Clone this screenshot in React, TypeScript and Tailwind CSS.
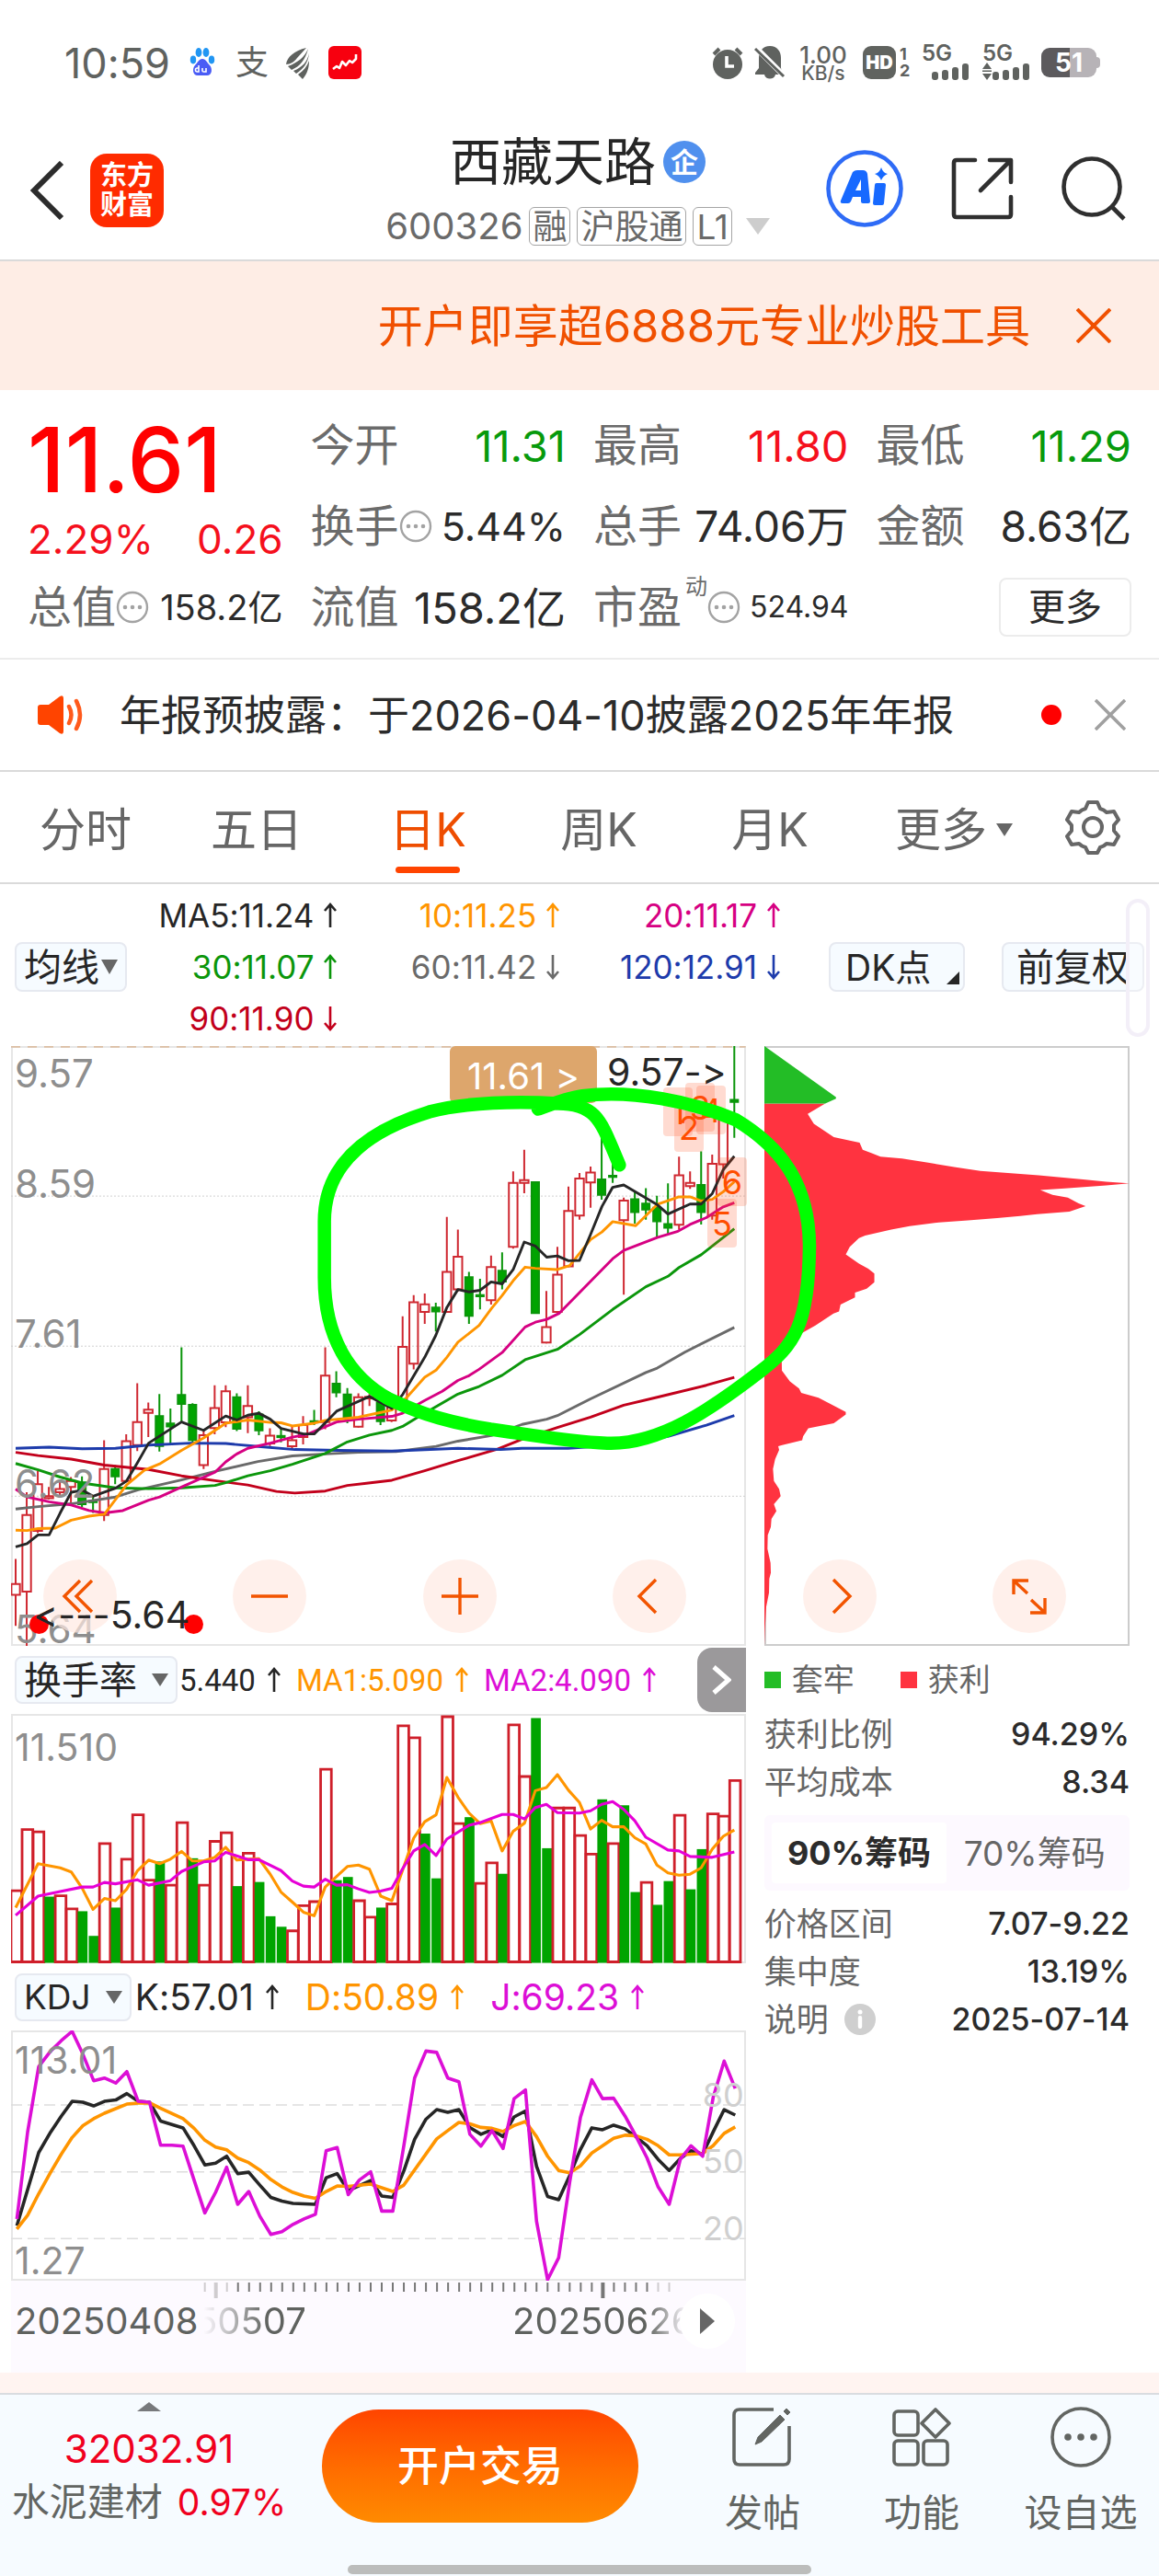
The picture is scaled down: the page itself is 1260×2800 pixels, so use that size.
import React from "react";

type Candle = [number, number, number, number, "r" | "g"];
type Pt = [number, number];

/* high, body top, body bottom, low, direction – in chart units, 36 units per day */
const candles: Candle[] = [
  [1325, 1388, 1415, 1493, "r"], [1158, 1215, 1407, 1543, "r"], [1105, 1138, 1255, 1260, "r"],
  [1145, 1168, 1173, 1176, "r"], [1128, 1150, 1158, 1168, "r"], [1120, 1130, 1145, 1185, "r"],
  [1118, 1133, 1188, 1195, "g"], [1165, 1180, 1183, 1210, "g"], [1028, 1100, 1215, 1230, "r"],
  [1090, 1100, 1118, 1138, "g"], [1013, 1030, 1130, 1133, "r"], [885, 982, 1040, 1055, "r"],
  [933, 951, 959, 1020, "r"], [912, 967, 1042, 1056, "g"], [948, 986, 993, 1036, "g"],
  [795, 914, 937, 985, "g"], [935, 939, 1027, 1033, "g"], [1005, 1015, 1090, 1100, "r"],
  [890, 947, 997, 1013, "r"], [890, 905, 983, 995, "r"], [910, 920, 999, 1005, "g"],
  [890, 942, 970, 1010, "r"], [955, 963, 1003, 1015, "g"], [998, 1016, 1036, 1042, "r"],
  [1000, 1017, 1020, 1033, "g"], [990, 1028, 1043, 1048, "r"], [967, 990, 1020, 1038, "r"],
  [952, 980, 983, 990, "g"], [795, 866, 982, 1000, "r"], [855, 886, 908, 920, "g"],
  [897, 913, 970, 985, "g"], [910, 920, 994, 996, "r"], [912, 919, 923, 942, "r"],
  [925, 933, 980, 990, "g"], [930, 945, 978, 982, "r"], [717, 794, 928, 930, "r"],
  [664, 682, 836, 850, "r"], [660, 687, 706, 736, "r"], [683, 695, 705, 755, "g"],
  [468, 606, 706, 708, "r"], [500, 568, 650, 655, "r"], [606, 619, 716, 736, "g"],
  [623, 664, 667, 700, "g"], [565, 594, 677, 688, "r"], [557, 603, 630, 650, "g"],
  [354, 383, 543, 548, "r"], [300, 376, 383, 409, "r"], [380, 381, 709, 710, "g"],
  [654, 744, 783, 785, "r"], [543, 613, 706, 708, "r"], [392, 453, 592, 594, "r"],
  [358, 372, 465, 475, "r"], [342, 357, 382, 445, "r"], [265, 374, 413, 425, "g"],
  [335, 365, 368, 383, "g"], [420, 427, 476, 663, "r"], [405, 424, 456, 485, "g"],
  [396, 435, 450, 475, "g"], [415, 445, 479, 518, "g"], [384, 486, 495, 510, "g"],
  [317, 364, 488, 500, "r"], [354, 383, 391, 398, "r"], [304, 388, 456, 487, "g"],
  [312, 335, 465, 475, "r"], [200, 210, 336, 372, "r"], [40, 175, 180, 270, "g"],
];

const maLines: { color: string; pts: Pt[] }[] = [
  { color: "#6a6a6a", pts: [[51,1200],[124,1194],[232,1187],[376,1170],[450,1152],[591,1127],[700,1106],[840,1081],[952,1067],[1059,1062],[1167,1058],[1290,1056],[1420,1043],[1491,1030],[1600,1016],[1700,988],[1780,975],[1815,966],[1923,924],[2103,858],[2140,847],[2230,807],[2391,745]] },
  { color: "#c2001b", pts: [[51,1058],[124,1066],[232,1075],[340,1090],[484,1101],[591,1117],[700,1129],[807,1140],[900,1156],[960,1160],[1059,1155],[1131,1141],[1200,1135],[1276,1128],[1383,1104],[1491,1079],[1620,1050],[1700,1025],[1815,996],[1923,970],[2031,940],[2140,920],[2300,890],[2391,870]] },
  { color: "#1d3bab", pts: [[51,1048],[160,1045],[268,1049],[376,1048],[484,1040],[620,1035],[735,1036],[850,1044],[960,1051],[1100,1053],[1276,1055],[1491,1048],[1630,1051],[1700,1048],[1850,1048],[2000,1040],[2175,1018],[2300,990],[2391,966]] },
  { color: "#0b960b", pts: [[51,1086],[124,1102],[196,1120],[268,1135],[376,1147],[484,1149],[591,1147],[700,1141],[735,1134],[807,1117],[880,1104],[952,1088],[1059,1061],[1131,1032],[1203,1015],[1276,1003],[1311,993],[1360,970],[1491,912],[1560,893],[1635,865],[1710,826],[1815,800],[1887,763],[1995,700],[2103,643],[2175,617],[2211,595],[2283,563],[2391,498]] },
  { color: "#d60082", pts: [[51,1150],[88,1170],[160,1182],[232,1190],[290,1204],[340,1210],[400,1204],[484,1178],[520,1170],[591,1145],[700,1108],[735,1082],[771,1062],[807,1048],[880,1035],[952,1020],[1000,1013],[1096,982],[1167,975],[1276,968],[1311,960],[1383,928],[1440,905],[1491,878],[1527,866],[1560,850],[1635,808],[1710,744],[1743,732],[1780,725],[1820,710],[1995,573],[2031,552],[2140,520],[2205,505],[2247,487],[2300,470],[2355,443],[2391,433]] },
  { color: "#ff9500", pts: [[51,1253],[88,1254],[124,1249],[180,1248],[232,1228],[290,1218],[340,1213],[412,1140],[470,1103],[520,1087],[591,1053],[663,1022],[735,985],[807,977],[880,983],[915,984],[952,992],[1023,985],[1060,978],[1167,970],[1240,958],[1276,952],[1325,920],[1383,870],[1420,852],[1455,820],[1491,782],[1560,740],[1600,698],[1635,665],[1671,628],[1710,594],[1743,597],[1815,600],[1855,590],[1923,525],[1960,506],[1995,480],[2070,490],[2140,437],[2211,418],[2247,418],[2283,428],[2319,424],[2355,405],[2391,380]] },
  { color: "#262626", pts: [[51,1295],[88,1287],[124,1265],[160,1265],[196,1210],[232,1158],[268,1153],[303,1168],[340,1158],[376,1148],[412,1130],[447,1085],[484,1035],[591,982],[663,1003],[735,967],[771,977],[807,965],[843,960],[880,975],[915,998],[988,1012],[1023,1012],[1096,955],[1203,918],[1276,948],[1312,912],[1383,820],[1419,765],[1455,695],[1491,650],[1527,656],[1563,652],[1599,631],[1635,636],[1671,600],[1707,531],[1743,541],[1780,569],[1815,566],[1851,578],[1887,577],[1923,512],[1960,442],[1995,394],[2031,388],[2139,437],[2175,461],[2247,436],[2283,436],[2319,410],[2355,350],[2391,316]] },
];

const bars: [number, "r" | "g"][] = [
  [551,"r"],[417,"r"],[422,"r"],[566,"g"],[562,"r"],[591,"r"],[598,"g"],[652,"g"],[448,"r"],[590,"g"],[482,"r"],
  [385,"r"],[528,"r"],[489,"g"],[539,"r"],[402,"r"],[482,"g"],[539,"r"],[443,"r"],[424,"r"],[543,"g"],[469,"r"],
  [534,"g"],[609,"g"],[632,"g"],[639,"r"],[584,"r"],[575,"r"],[285,"r"],[530,"g"],[523,"g"],[573,"r"],[609,"r"],
  [590,"g"],[580,"r"],[190,"r"],[216,"r"],[428,"g"],[526,"g"],[170,"r"],[404,"r"],[392,"g"],[535,"r"],[490,"r"],
  [516,"g"],[188,"r"],[301,"r"],[175,"g"],[460,"g"],[370,"r"],[370,"r"],[430,"r"],[471,"r"],[353,"g"],[448,"r"],
  [366,"g"],[556,"g"],[533,"r"],[584,"g"],[532,"g"],[386,"r"],[550,"g"],[462,"g"],[383,"r"],[388,"r"],[310,"r"],
];

const turnLines: { color: string; pts: Pt[] }[] = [
  { color: "#ff9500", pts: [[51,590],[124,494],[196,503],[232,512],[268,548],[303,594],[340,570],[376,575],[412,550],[447,510],[484,486],[520,494],[555,484],[591,467],[627,488],[663,488],[699,480],[735,458],[771,486],[807,484],[843,483],[880,517],[915,556],[952,578],[988,600],[1023,608],[1059,545],[1096,522],[1131,500],[1167,497],[1203,506],[1240,565],[1276,575],[1311,508],[1347,438],[1383,402],[1420,387],[1455,305],[1491,348],[1527,383],[1563,406],[1599,400],[1635,466],[1671,423],[1708,405],[1743,334],[1779,327],[1815,299],[1851,333],[1887,360],[1923,418],[1959,399],[1995,413],[2031,413],[2067,437],[2103,451],[2139,497],[2175,514],[2211,519],[2247,517],[2283,503],[2319,462],[2355,434],[2391,420]] },
  { color: "#e600d6", pts: [[51,607],[124,565],[196,555],[268,545],[303,545],[340,535],[376,538],[447,529],[484,541],[555,531],[591,511],[663,490],[699,488],[735,469],[807,485],[843,485],[915,509],[952,532],[988,543],[1023,545],[1059,528],[1096,541],[1131,540],[1167,549],[1203,557],[1240,554],[1276,548],[1311,505],[1347,466],[1383,452],[1420,476],[1455,440],[1527,410],[1563,404],[1635,386],[1671,386],[1708,396],[1743,371],[1779,364],[1815,382],[1887,383],[1923,378],[1959,364],[1995,358],[2031,375],[2067,400],[2103,436],[2175,464],[2211,466],[2247,478],[2319,480],[2391,468]] },
];

const kdjLines: { color: string; pts: Pt[] }[] = [
  { color: "#262626", pts: [[55,1285],[126,1125],[165,1080],[200,1045],[235,1013],[270,1015],[305,1023],[340,1013],[377,1010],[413,996],[450,1013],[487,1015],[523,1056],[596,1071],[632,1110],[667,1152],[702,1148],[738,1133],[774,1171],[810,1168],[846,1196],[882,1223],[918,1231],[954,1236],[1027,1238],[1062,1180],[1098,1171],[1134,1208],[1207,1186],[1243,1220],[1279,1223],[1315,1165],[1350,1096],[1387,1052],[1422,1031],[1458,1037],[1494,1031],[1530,1070],[1566,1085],[1602,1075],[1638,1090],[1674,1047],[1711,1034],[1747,1155],[1783,1221],[1819,1228],[1855,1175],[1890,1118],[1927,1071],[1962,1075],[1998,1065],[2035,1073],[2070,1090],[2107,1110],[2143,1140],[2179,1164],[2215,1138],[2250,1121],[2288,1128],[2322,1080],[2358,1031],[2394,1043]] },
  { color: "#ff9500", pts: [[55,1292],[90,1262],[126,1215],[165,1168],[200,1128],[235,1092],[270,1066],[305,1051],[340,1039],[413,1019],[450,1017],[490,1017],[523,1028],[596,1051],[632,1072],[667,1098],[702,1113],[738,1119],[774,1137],[810,1147],[846,1163],[882,1184],[918,1200],[954,1212],[990,1220],[1027,1225],[1062,1210],[1098,1198],[1134,1199],[1207,1194],[1279,1210],[1315,1196],[1422,1095],[1458,1077],[1494,1059],[1530,1062],[1566,1070],[1602,1072],[1638,1079],[1674,1066],[1711,1057],[1747,1090],[1783,1133],[1819,1164],[1855,1169],[1890,1154],[1927,1126],[1998,1094],[2035,1087],[2070,1088],[2107,1096],[2143,1110],[2179,1130],[2215,1130],[2288,1127],[2322,1110],[2358,1083],[2394,1069]] },
  { color: "#dc0fd6", pts: [[55,1270],[90,1080],[126,937],[165,903],[200,880],[235,860],[270,910],[305,968],[340,962],[377,973],[413,948],[450,1013],[487,1015],[523,1109],[560,1109],[596,1111],[632,1185],[667,1257],[702,1212],[738,1157],[774,1238],[810,1210],[846,1264],[882,1304],[918,1298],[954,1282],[990,1270],[1027,1260],[1062,1121],[1098,1114],[1134,1217],[1170,1185],[1207,1167],[1243,1253],[1279,1253],[1315,1110],[1350,962],[1387,903],[1422,906],[1458,962],[1494,970],[1530,1085],[1566,1111],[1602,1077],[1638,1116],[1674,1007],[1711,988],[1747,1275],[1783,1403],[1819,1355],[1855,1190],[1890,1048],[1927,966],[1962,1007],[1998,1006],[2035,1045],[2070,1088],[2107,1137],[2143,1200],[2179,1238],[2215,1140],[2250,1110],[2288,1133],[2322,1005],[2358,925],[2394,985]] },
];

const profitArea =
  "92,184 290,184 233,210 253,235 318,268 370,277 402,282 412,300 440,308 470,317 540,322 630,333 710,343 795,353 885,358 985,364 1130,374 1205,380 1280,384 1205,389 1070,397 990,401 1030,413 1080,420 1115,434 1138,441 1085,455 980,461 925,466 850,471 755,477 660,482 565,491 505,500 420,515 400,521 370,543 357,562 400,585 430,598 450,610 450,632 425,648 387,658 387,670 340,688 335,705 317,710 258,740 185,772 148,805 149,853 175,880 205,898 212,909 268,921 357,957 357,963 318,985 235,998 218,1018 215,1028 150,1040 137,1043 140,1052 127,1075 120,1100 123,1130 140,1150 145,1168 123,1188 131,1205 115,1225 113,1245 103,1265 102,1300 112,1335 113,1360 108,1375 107,1410 98,1445 94,1500 92,1543";

const join = (pts: Pt[]) => pts.map((p) => p.join(",")).join(" ");

function Lines({ lines, width }: { lines: { color: string; pts: Pt[] }[]; width: number }) {
  return (
    <>
      {lines.map((l) => (
        <polyline key={l.color} points={join(l.pts)} fill="none" stroke={l.color} strokeWidth={width} strokeLinejoin="round" vectorEffect="non-scaling-stroke" />
      ))}
    </>
  );
}

function Arrow({ down = false }: { down?: boolean }) {
  return (
    <svg viewBox="0 0 16 28" className="h-7 w-4 shrink-0" fill="none" stroke="currentColor" strokeWidth="2.6" role="img" aria-label={down ? "下降" : "上升"}>
      {down ? <path d="M8 1v25M2 19l6 7 6-7" /> : <path d="M8 27V2M2 9l6-7 6 7" />}
    </svg>
  );
}

function Triangle({ className }: { className: string }) {
  return (
    <svg viewBox="0 0 20 18" className={className} preserveAspectRatio="none" fill="currentColor" aria-hidden="true">
      <path d="M0 0h20L10 18z" />
    </svg>
  );
}

function Dots() {
  return (
    <svg viewBox="0 0 36 36" className="size-9 shrink-0 text-[#a3a3a3]" aria-hidden="true">
      <circle cx="18" cy="18" r="16" fill="none" stroke="currentColor" strokeWidth="2.4" />
      <g fill="currentColor"><circle cx="10" cy="18" r="2.3" /><circle cx="18" cy="18" r="2.3" /><circle cx="26" cy="18" r="2.3" /></g>
    </svg>
  );
}

function Cross({ className }: { className: string }) {
  return (
    <svg viewBox="0 0 36 36" className={className} fill="none" stroke="currentColor" strokeWidth="3.8" aria-hidden="true">
      <path d="M1 1l34 34M35 1L1 35" />
    </svg>
  );
}

function Signal({ data = false }: { data?: boolean }) {
  return (
    <div className="flex w-[52px] flex-col">
      <span className="text-2xl leading-5 font-semibold">5G</span>
      <svg viewBox="0 0 52 20" className="h-5 w-[52px]" fill="currentColor" aria-hidden="true">
        {data && <path d="M5 0l5 7H0zM0 8.5h10v1.5H0zM0 12h10l-5 7z" />}
        <rect x="11" y="10" width="7" height="9" rx="3" /><rect x="22" y="8" width="7" height="11" rx="3" />
        <rect x="33" y="5" width="7" height="14" rx="3" /><rect x="44" y="1" width="7" height="18" rx="3" />
      </svg>
    </div>
  );
}

function StatusBar() {
  return (
    <div className="flex h-[136px] items-center justify-between pr-16 pl-[70px] text-[#5f625f]">
      <div className="flex items-center">
        <span className="w-[136px] text-[45px] leading-none">10:59</span>
        <svg viewBox="0 0 28 34" className="h-9 w-7" aria-label="百度" role="img">
          <g fill="#2196f3"><ellipse cx="10" cy="6" rx="3.4" ry="5" /><ellipse cx="18" cy="6" rx="3.4" ry="5" /><ellipse cx="4" cy="14" rx="3.2" ry="4.4" /><ellipse cx="24" cy="14" rx="3.2" ry="4.4" /></g>
          <path d="M14 13c4 0 5 4 8 7s3 11-3 11H9c-6 0-6-8-3-11s4-7 8-7z" fill="#4a5cf5" />
          <path d="M10 20v7H8.500a2 2 0 010-4H10M14 23v3q0 1 1.500 1H18v-4" fill="none" stroke="#fff" strokeWidth="1.600" />
        </svg>
        <span className="ml-[22px] text-4xl leading-none">支</span>
        <svg viewBox="0 0 26 36" className="ml-[19px] h-9 w-[26px]" fill="currentColor" aria-hidden="true">
          <path d="M22 2C9 5 1 12 0 20c5 0 9-3 12-7zM24 3C20 12 13 18 2 22l4 4c9-4 15-11 18-23zM25 8c-2 9-7 15-17 19l3 3c8-5 13-12 14-22zM25 16c-2 6-6 11-12 15l5 5c5-6 7-12 7-20z" />
        </svg>
        <svg viewBox="0 0 36 36" className="ml-5 size-9" role="img" aria-label="东方财富">
          <rect width="36" height="36" rx="6" fill="#f7000f" />
          <path d="M5 25l4-3 3 2 3-7 4 4 4-5 3 2 4-4v-5" fill="none" stroke="#fff" strokeWidth="2.600" strokeLinejoin="round" />
        </svg>
      </div>
      <div className="flex items-center">
        <svg viewBox="0 0 34 36" className="h-9 w-[34px]" aria-hidden="true">
          <circle cx="17" cy="20" r="16" fill="currentColor" />
          <path d="M2 9l6-6M32 9l-6-6" stroke="currentColor" strokeWidth="4" />
          <path d="M16 11v11h8" fill="none" stroke="#fff" strokeWidth="3.600" />
        </svg>
        <svg viewBox="0 0 34 36" className="ml-3 h-9 w-[34px]" aria-hidden="true">
          <path d="M17 0C9 0 5 6 5 13v11l-4 5v2h10c1 6 11 6 12 0h8L29 24V13C29 6 25 0 17 0z" fill="currentColor" />
          <path d="M0 0l34 34" stroke="#fff" strokeWidth="6" /><path d="M1 3l31 30" stroke="currentColor" strokeWidth="3" />
        </svg>
        <div className="ml-2.5 flex w-[62px] flex-col items-center font-medium">
          <span className="text-[26px] leading-6">1.00</span>
          <span className="text-[21px] leading-4">KB/s</span>
        </div>
        <span className="ml-3 flex size-9 items-center justify-center rounded-[9px] bg-[#60635f] text-xl leading-none font-black text-white">HD</span>
        <span className="ml-1 flex w-3 flex-col text-lg leading-[18px] font-bold"><span>1</span><span>2</span></span>
        <div className="ml-3"><Signal /></div>
        <div className="ml-3.5"><Signal data /></div>
        <div className="ml-3 flex items-center">
          <span className="flex h-8 w-[60px] items-center justify-center rounded-[9px] bg-[linear-gradient(to_right,#5c5a5d_51%,#b7b3b7_51%)] text-[28px] leading-none font-bold text-white">51</span>
          <span className="h-3 w-1 rounded-r bg-[#b7b3b7]" />
        </div>
      </div>
    </div>
  );
}

function Header() {
  const tag = "flex h-[42px] items-center rounded-md border border-[#a5a5a5] px-[3px] leading-none";
  return (
    <header className="grid h-[148px] grid-cols-[1fr_auto_1fr] items-center border-b-2 border-[#dadada] pr-9 pl-8">
      <div className="flex items-center gap-7 pb-1">
        <button aria-label="返回">
          <svg viewBox="0 0 38 64" className="h-16 w-[38px]" fill="none" stroke="#2c2c2c" strokeWidth="6"><path d="M35 2L5 32l30 30" /></svg>
        </button>
        <a href="#home" className="flex size-20 flex-col items-center justify-center rounded-[18px] bg-[#ff2b00] text-[29px] leading-8 font-bold text-white">
          <span>东方</span><span>财富</span>
        </a>
      </div>
      <div className="flex flex-col items-center">
        <h1 className="flex h-[74px] items-center gap-2 text-[56px] leading-none text-[#262626]">
          西藏天路
          <span className="flex size-[46px] items-center justify-center rounded-full bg-[#5090ee] text-[30px] font-bold text-white">企</span>
        </h1>
        <div className="flex h-[66px] items-center gap-[7px] text-[37px] text-[#6a6a6a]">
          <span className="text-[40px] leading-none">600326</span>
          <span className={tag}>融</span><span className={tag}>沪股通</span><span className={tag}>L1</span>
          <Triangle className="ml-2 h-[18px] w-[26px] text-[#cdcdcd]" />
        </div>
      </div>
      <div className="flex items-center justify-end gap-[52px] pb-2">
        <button aria-label="AI 助手">
          <svg viewBox="0 0 84 84" className="size-[84px]">
            <circle cx="42" cy="42" r="39.500" fill="none" stroke="#2e6bf6" strokeWidth="4.500" />
            <path fillRule="evenodd" d="M29 24q2-2 5-2h6q4 0 5 4l3 30q0 2-2 2h-6q-2 0-2-2v-5h-9l-2 5q-1 2-3 2h-6q-3 0-2-3zM38 32l-6 12h6z" fill="#1769ff" />
            <path d="M55 36h8q2 0 2 2l-2 20q0 2-2 2h-8q-2 0-2-2l2-20q0-2 2-2zM60 19q2 6 7 7-5 2-7 7-2-5-7-7 5-1 7-7z" fill="#1769ff" />
          </svg>
        </button>
        <button aria-label="分享">
          <svg viewBox="0 0 68 68" className="size-[68px]" fill="none" stroke="#2f2f2f" strokeWidth="4.600" strokeLinecap="round" strokeLinejoin="round">
            <path d="M26 3H6Q3 3 3 6v56q0 3 3 3h56q3 0 3-3V43M42 3h23v24M64 4L32 36" />
          </svg>
        </button>
        <button aria-label="搜索">
          <svg viewBox="0 0 70 70" className="size-[70px]" fill="none" stroke="#2f2f2f" strokeWidth="4.600">
            <circle cx="33" cy="33" r="30.500" /><path d="M54 54l14 14" />
          </svg>
        </button>
      </div>
    </header>
  );
}

function Quote() {
  const label = "text-5xl leading-none text-[#6b6b6b]";
  const row = "flex h-[88px] items-center justify-between";
  return (
    <section className="grid grid-cols-4 gap-x-[30px] border-b-2 border-[#ececec] px-[30px] pt-4 pb-[11px] text-[47px] leading-none text-[#2b2b2b]">
      <div className="row-span-2 flex flex-col justify-between pt-5 pb-2 text-[#f5101d]">
        <span className="text-[98px] leading-[80px] font-medium text-[#ff0000]">11.61</span>
        <div className="flex justify-between text-[44px]"><span>2.29%</span><span>0.26</span></div>
      </div>
      <div className={row}><span className={label}>今开</span><span className="text-[#079a0c]">11.31</span></div>
      <div className={row}><span className={label}>最高</span><span className="text-[#f5101d]">11.80</span></div>
      <div className={row}><span className={label}>最低</span><span className="text-[#079a0c]">11.29</span></div>
      <div className={row}><span className="flex items-center"><span className={label}>换手</span><Dots /></span><span className="text-[43px]">5.44%</span></div>
      <div className={row}><span className={label}>总手</span><span className="text-[46px]">74.06万</span></div>
      <div className={row}><span className={label}>金额</span><span className="text-[46px]">8.63亿</span></div>
      <div className={row}><span className="flex items-center"><span className={label}>总值</span><Dots /></span><span className="text-[38px]">158.2亿</span></div>
      <div className={row}><span className={label}>流值</span><span>158.2亿</span></div>
      <div className={row}>
        <span className="flex items-center"><span className={label}>市盈</span><span className="mb-11 ml-1 text-2xl leading-none text-[#6b6b6b]">动</span><Dots /></span>
        <span className="text-[32px]">524.94</span>
      </div>
      <div className="flex items-center justify-end"><button className="h-16 rounded-lg border-2 border-[#ececec] px-[30px] text-[40px] leading-none">更多</button></div>
    </section>
  );
}

function Notice() {
  return (
    <section className="flex h-[122px] items-center border-b-2 border-[#dadada] pr-9 pl-10">
      <svg viewBox="0 0 52 42" className="h-[42px] w-[52px]" aria-hidden="true">
        <path d="M1 13q0-3 3-3h9L25 1q4-2 4 2v36q0 4-4 2l-12-9H4q-3 0-3-3z" fill="#ff4400" />
        <path d="M35 12q5 9 0 18M43 6q8 15 0 30" fill="none" stroke="#ff5a1c" strokeWidth="4.500" strokeLinecap="round" />
      </svg>
      <a href="#notice" className="ml-[38px] flex-1 text-[45px] leading-none whitespace-nowrap text-[#2b2b2b]">年报预披露：于2026-04-10披露2025年年报</a>
      <span className="size-[22px] rounded-full bg-[#ff0000]" />
      <button aria-label="关闭公告" className="ml-9"><Cross className="size-[34px] text-[#a0a0a0]" /></button>
    </section>
  );
}

function Tabs() {
  const tab = "flex h-full flex-[186] items-center justify-center pt-1.5";
  return (
    <nav className="flex h-[122px] items-center border-b-2 border-[#dadada] text-[50px] leading-none text-[#666]">
      <button className={tab}>分时</button>
      <button className={tab}>五日</button>
      <button className="relative flex h-full flex-[186] items-center justify-center pt-1.5 text-[#ee4d00]">
        日K
        <span className="absolute bottom-2.5 h-[7px] w-[70px] rounded-full bg-[#ff4400]" />
      </button>
      <button className={tab}>周K</button>
      <button className={tab}>月K</button>
      <button className="flex h-full flex-[214] items-center justify-center gap-2.5 pt-1.5">更多<Triangle className="h-3.5 w-[18px]" /></button>
      <button aria-label="设置" className="flex flex-[116] justify-center">
        <svg viewBox="0 0 60 60" className="mr-7 size-[60px]" fill="none" stroke="#666" strokeWidth="4" strokeLinejoin="round">
          <path d="M25 3h10l3 7q4 1 7 4l8-1 5 9-5 6v6l5 6-5 9-8-1q-3 3-7 4l-3 6H25l-3-6q-4-1-7-4l-8 1-5-9 5-6v-6l-5-6 5-9 8 1q3-3 7-4z" />
          <circle cx="30" cy="30" r="10" />
        </svg>
      </button>
    </nav>
  );
}

const maReadings: { text: string; color: string; down?: boolean }[] = [
  { text: "MA5:11.24", color: "text-[#262626]" }, { text: "10:11.25", color: "text-[#ff9500]" }, { text: "20:11.17", color: "text-[#d60082]" },
  { text: "30:11.07", color: "text-[#0b960b]" }, { text: "60:11.42", color: "text-[#6a6a6a]", down: true }, { text: "120:12.91", color: "text-[#1d3bab]", down: true },
  { text: "90:11.90", color: "text-[#c2001b]", down: true },
];

const chip = "flex items-center rounded-lg border-2 border-[#e6e9f0] bg-[#f6fbff] leading-none text-[#262626]";

function MaBar() {
  return (
    <section className="relative flex h-[176px] items-center pt-1 pr-4 pl-4">
      <button className={`${chip} h-[54px] gap-0.5 px-2 text-[41px]`}>均线<Triangle className="h-4 w-[18px] text-[#666]" /></button>
      <div className="ml-7 grid flex-[704] grid-cols-[200fr_240fr_238fr] text-[35px] leading-[56px]">
        {maReadings.map((m) => (
          <span key={m.text} className={`flex items-center justify-end gap-2.5 whitespace-nowrap ${m.color}`}>{m.text}<Arrow down={m.down} /></span>
        ))}
      </div>
      <button className={`${chip} relative ml-[52px] h-[54px] w-[148px] pl-4 text-[39px]`}>
        DK点
        <svg viewBox="0 0 14 14" className="absolute right-1 bottom-1.5 size-3.5" aria-hidden="true"><path d="M14 0v14H0z" fill="#262626" /></svg>
      </button>
      <button className={`${chip} ml-10 h-[54px] px-3.5 text-[41px]`}>前复权</button>
      <span className="absolute top-4 right-2.5 h-[150px] w-[26px] rounded-full border-4 border-[#f3eff8] bg-white/30" />
    </section>
  );
}

const plot = "absolute -inset-0.5 size-[calc(100%+4px)]";

function CandleChart() {
  return (
    <div className="relative h-[652px] border-2 border-[#e6e6e6]">
      <svg viewBox="36 40 2392 1503" preserveAspectRatio="none" className={plot} role="img" aria-label="日K线图">
        <path d="M36 416H2428M36 792H2428M36 1168H2428" stroke="#d0d0d0" strokeWidth="1" vectorEffect="non-scaling-stroke" strokeDasharray="2 2" />
        <path d="M36 42H2428" stroke="#dcbfa4" strokeWidth="2" strokeDasharray="10 8" vectorEffect="non-scaling-stroke" />
        {candles.map(([hi, top, bot, lo, dir], i) => {
          const x = 51 + i * 36;
          const c = dir === "r" ? "#cf2831" : "#0a950a";
          return (
            <g key={i} stroke={c} strokeWidth="2">
              <path d={`M${x} ${hi}V${top}M${x} ${bot}V${lo}`} vectorEffect="non-scaling-stroke" />
              <rect x={x - (dir === "r" ? 14 : 12)} y={top} width={dir === "r" ? 28 : 24} height={bot - top} fill={dir === "r" ? "none" : "#00a400"} vectorEffect="non-scaling-stroke" />
            </g>
          );
        })}
        <Lines lines={maLines} width={2.9} />
      </svg>
      <div className="text-[42px] leading-10 text-[#8e8e8e]">
        <span className="absolute top-2 left-0.5">9.57</span>
        <span className="absolute top-32 left-0.5">8.59</span>
        <span className="absolute top-[291px] left-0.5">7.61</span>
        <span className="absolute top-[454px] left-0.5">6.62</span>
        <span className="absolute top-[612px] left-0.5">5.64</span>
      </div>
    </div>
  );
}

/* order marks pinned to the candles at the right edge of the chart */
const marks: { n: string; place: string }[] = [
  { n: "1", place: "top-[45px] left-[709px]" },
  { n: "2", place: "top-[62px] left-[721px]" },
  { n: "3", place: "top-[40px] left-[733px]" },
  { n: "4", place: "top-[43px] left-[745px]" },
  { n: "6", place: "top-[121px] left-[768px]" },
  { n: "5", place: "top-[166px] left-[757px]" },
];

function ChartOverlay() {
  const round = "flex size-20 items-center justify-center rounded-full bg-[#ffe9e3]/70 text-[#f25400]";
  const icon = { viewBox: "0 0 40 40", className: "size-10", fill: "none", stroke: "currentColor", strokeWidth: 3.4 };
  return (
    <div className="pointer-events-none absolute inset-x-0 top-0 h-[652px]">
      <div className="absolute inset-y-0 left-3">
        <button className="absolute top-0 left-[477px] h-[62px] w-40 rounded-md bg-[#dda66c] pt-1 text-[40px] leading-none whitespace-nowrap text-white">11.61 &gt;</button>
        <span className="absolute top-2 left-[648px] text-[41px] leading-10 whitespace-nowrap text-[#262626]">9.57-&gt;</span>
        {marks.map((m) => (
          <span key={m.n} className={`absolute ${m.place} flex h-[53px] w-8 items-center justify-center rounded bg-[#ff4d1a]/20 text-4xl leading-none text-[#ff4d00]`}>{m.n}</span>
        ))}
        <span className="absolute top-[618px] left-5 size-[21px] rounded-full bg-[#ff0000]" />
        <span className="absolute top-[618px] left-[188px] size-[21px] rounded-full bg-[#ff0000]" />
      </div>
      <div className="absolute inset-x-0 bottom-3.5 flex justify-between pr-[101px] pl-[47px]">
        <button className={round} aria-label="最早"><svg {...icon}><path d="M20 3L3 20l17 17M33 3L16 20l17 17" /></svg></button>
        <button className={round} aria-label="缩小"><svg {...icon}><path d="M0 20h40" /></svg></button>
        <button className={round} aria-label="放大"><svg {...icon}><path d="M0 20h40M20 0v40" /></svg></button>
        <button className={round} aria-label="左移"><svg {...icon}><path d="M27 2L9 20l18 18" /></svg></button>
        <button className={round} aria-label="右移"><svg {...icon}><path d="M13 2l18 18-18 18" /></svg></button>
        <button className={round} aria-label="全屏"><svg {...icon}><path d="M3 18V3h16M3 3l15 14M37 22v16H21M37 38L22 24" /></svg></button>
      </div>
      <span className="absolute bottom-3.5 left-9 text-[41px] leading-10 whitespace-nowrap text-[#262626]">&lt;---5.64</span>
      <svg viewBox="0 40 3780 1503" preserveAspectRatio="none" className="absolute inset-0 size-full" aria-hidden="true">
        <path
          d="M2020 338C1960 230 1950 185 1820 184C1690 178 1520 180 1400 205C1230 245 1058 320 1058 480L1058 620C1058 770 1140 870 1270 925C1380 965 1480 985 1600 1000C1700 1010 1850 1032 1980 1035C2150 1040 2320 950 2480 855C2590 790 2638 740 2640 540C2638 380 2540 290 2400 225C2260 180 2060 148 1900 165C1850 170 1800 185 1755 198"
          fill="none" stroke="#00ff00" strokeWidth="14.500" strokeLinecap="round" strokeLinejoin="round" vectorEffect="non-scaling-stroke"
        />
      </svg>
    </div>
  );
}

function Reading({ children, className }: { children: React.ReactNode; className: string }) {
  return <span className={`flex items-center gap-3 whitespace-nowrap ${className}`}>{children}<Arrow /></span>;
}

function TurnoverPanel() {
  return (
    <>
      <div className="flex h-[74px] items-center pl-1 text-[40px] leading-none">
        <button className={`${chip} h-[52px] gap-4 px-2 text-[41px]`}>换手率<Triangle className="h-3.5 w-[18px] text-[#666]" /></button>
        <div className="ml-0.5 flex flex-1 items-center gap-4 font-['Roboto'] text-[33px] leading-none">
          <Reading className="text-[#262626]">5.440</Reading>
          <Reading className="text-[#ff9500]">MA1:5.090</Reading>
          <Reading className="text-[#dc0fd6]">MA2:4.090</Reading>
        </div>
        <button aria-label="下一指标" className="flex h-[70px] w-[53px] items-center justify-center rounded-l-2xl bg-[#9b999b]">
          <svg viewBox="0 0 22 32" className="h-8 w-[22px]" fill="none" stroke="#fff" strokeWidth="5"><path d="M3 2l16 14L3 30" /></svg>
        </button>
      </div>
      <div className="relative h-[271px] border-2 border-[#e6e6e6]">
        <svg viewBox="36 166 2392 546" preserveAspectRatio="none" className={plot} role="img" aria-label="换手率柱状图">
          {bars.map(([top, dir], i) => {
            const x = 53 + i * 36;
            return dir === "r" ? (
              <rect key={i} x={x - 17} y={top + 2} width="35" height={707 - top} fill="#fff" stroke="#cf1f2a" strokeWidth="2.800" vectorEffect="non-scaling-stroke" />
            ) : (
              <rect key={i} x={x - 16} y={top} width="32" height={711 - top} fill="#00a400" />
            );
          })}
          <Lines lines={turnLines} width={3.1} />
        </svg>
        <span className="absolute top-3.5 left-0.5 text-[41px] leading-10 text-[#8e8e8e]">11.510</span>
      </div>
    </>
  );
}

function KdjPanel() {
  return (
    <>
      <div className="flex h-[73px] items-center pl-1 leading-none">
        <button className={`${chip} h-[52px] gap-4 px-2 text-[37px]`}>KDJ<Triangle className="h-3.5 w-[18px] text-[#666]" /></button>
        <div className="ml-1 flex items-center gap-7 text-[39px]">
          <Reading className="text-[#262626]">K:57.01</Reading>
          <Reading className="text-[#ff9500]">D:50.89</Reading>
          <Reading className="text-[#dc0fd6]">J:69.23</Reading>
        </div>
      </div>
      <div className="relative h-[272px] border-2 border-[#e6e6e6] text-[41px] leading-10 text-[#8e8e8e]">
        <svg viewBox="36 858 2392 547" preserveAspectRatio="none" className={plot} role="img" aria-label="KDJ指标图">
          <path d="M36 1021H2428M36 1167H2428M36 1313H2428" stroke="#dddddd" strokeWidth="1.500" strokeDasharray="12 6" vectorEffect="non-scaling-stroke" />
          <Lines lines={kdjLines} width={3.6} />
        </svg>
        <span className="absolute top-2.5 left-0.5">113.01</span>
        <span className="absolute bottom-0 left-0.5">1.27</span>
        <div className="text-4xl leading-10 text-[#cfcfcf]">
          <span className="absolute top-12 right-0">80</span>
          <span className="absolute top-[120px] right-0">50</span>
          <span className="absolute top-[193px] right-0">20</span>
        </div>
      </div>
    </>
  );
}

function DateAxis() {
  return (
    <div className="relative h-[100px] bg-[#fdfaff] text-[40px] leading-none text-[#5f625f]">
      <svg viewBox="36 0 2392 22" preserveAspectRatio="none" className="absolute inset-x-0 top-0 h-[22px] w-full" aria-hidden="true">
        {Array.from({ length: 43 }, (_, k) => {
          const x = 667 + k * 36;
          const big = k === 1 || k === 36;
          const soft = k < 3 || k > 40;
          return <path key={k} d={`M${x} 2V${big ? 19 : 12}`} stroke={soft ? "#cfcccf" : "#777"} strokeWidth={big ? 4 : 2} vectorEffect="non-scaling-stroke" />;
        })}
      </svg>
      <span className="absolute top-6 left-1">20250408</span>
      <span className="absolute top-6 left-[200px] [mask-image:linear-gradient(to_right,transparent_8%,black_65%)]">50507</span>
      <span className="absolute top-6 left-[545px] [mask-image:linear-gradient(to_right,black_74%,transparent_96%)]">20250626</span>
      <button aria-label="播放" className="absolute top-3.5 right-3 flex size-[60px] items-center justify-center rounded-full bg-white">
        <svg viewBox="0 0 16 28" className="h-7 w-4" aria-hidden="true"><path d="M0 0l16 14L0 28z" fill="#666" /></svg>
      </button>
    </div>
  );
}

function StatRow({ name, value, info = false }: { name: string; value: string; info?: boolean }) {
  return (
    <div className="flex h-[52px] items-center justify-between whitespace-nowrap">
      <dt className="flex items-center gap-4 text-[35px] leading-none text-[#666]">
        {name}
        {info && (
          <svg viewBox="0 0 36 36" className="size-9" role="img" aria-label="说明">
            <circle cx="18" cy="18" r="17" fill="#cfcfcf" /><circle cx="18" cy="10" r="2.500" fill="#fff" /><rect x="15.800" y="14" width="4.400" height="14" rx="2" fill="#fff" />
          </svg>
        )}
      </dt>
      <dd className="text-[34px] leading-none font-medium text-[#2b2b2b]">{value}</dd>
    </div>
  );
}

function ChipPanel() {
  return (
    <aside>
      <div className="relative h-[652px] border-2 border-[#cccccc]">
        <svg viewBox="92 40 1190 1503" preserveAspectRatio="none" className={plot} role="img" aria-label="筹码分布图">
          <polygon points={profitArea} fill="#ff3340" />
          <polygon points="92,40 325,168 325,172 290,184 92,184" fill="#23bd26" />
        </svg>
      </div>
      <div className="flex h-[74px] items-center text-[34px] leading-none text-[#666]">
        <span className="mr-3 size-[18px] bg-[#23bd26]" />套牢
        <span className="mr-3 ml-[50px] size-[18px] bg-[#ff3340]" />获利
      </div>
      <dl className="-mt-1"><StatRow name="获利比例" value="94.29%" /><StatRow name="平均成本" value="8.34" /></dl>
      <div className="mt-2.5 mb-2.5 flex h-[82px] rounded-md bg-[#fdf9ff] p-2 text-[37px] leading-none">
        <button className="flex-1 rounded bg-white text-4xl font-bold text-[#2b2b2b]">90%筹码</button>
        <button className="flex-1 text-[#666]">70%筹码</button>
      </div>
      <dl><StatRow name="价格区间" value="7.07-9.22" /><StatRow name="集中度" value="13.19%" /><StatRow name="说明" value="2025-07-14" info /></dl>
    </aside>
  );
}

function BottomBar() {
  const item = "flex w-[122px] flex-col items-center gap-7 text-[41px] leading-none text-[#626562]";
  return (
    <footer className="relative flex h-[199px] items-start border-t-2 border-[#d9dce0] bg-[#f6fbff] pr-6 pl-2">
      <a href="#sector" className="flex w-[308px] flex-col items-center pt-2">
        <svg viewBox="0 0 26 10" className="h-2.5 w-[26px]" aria-hidden="true"><path d="M0 10h26L13 0z" fill="#77797c" /></svg>
        <span className="mt-5 text-[42px] leading-none text-[#f0001e]">32032.91</span>
        <span className="mt-4 flex items-center gap-4 text-[41px] leading-none whitespace-nowrap text-[#626562]">水泥建材<span className="text-[39px] text-[#f0001e]">0.97%</span></span>
      </a>
      <button className="mt-4 ml-[34px] h-[123px] flex-[344] rounded-full bg-linear-to-b from-[#ff4400] to-[#ff8a00] text-[45px] leading-none font-medium text-white">开户交易</button>
      <div className="ml-[74px] flex flex-[468] justify-between pt-3">
        <button className={item}>
          <svg viewBox="0 0 68 68" className="size-[68px]" fill="none" stroke="currentColor" strokeWidth="3.600" strokeLinejoin="round">
            <path d="M46 4H9Q3 4 3 10v48q0 6 6 6h48q6 0 6-6V22" /><path d="M26 42l3-8 24-24 5 5-25 24zM57 6l3-3 4 4-3 3z" fill="currentColor" strokeWidth="1" />
          </svg>
          发帖
        </button>
        <button className={item}>
          <svg viewBox="0 0 68 68" className="size-[68px]" fill="none" stroke="currentColor" strokeWidth="3.600" strokeLinejoin="round">
            <rect x="4" y="6" width="26" height="26" rx="4" /><rect x="4" y="38" width="26" height="26" rx="4" /><rect x="36" y="38" width="26" height="26" rx="4" />
            <path d="M49 4l15 15-15 15-15-15z" />
          </svg>
          功能
        </button>
        <button className={item}>
          <svg viewBox="0 0 68 68" className="size-[68px]" fill="none" stroke="currentColor" strokeWidth="3.600">
            <circle cx="34" cy="34" r="31" /><g fill="currentColor" stroke="none"><circle cx="20" cy="34" r="3.800" /><circle cx="34" cy="34" r="3.800" /><circle cx="48" cy="34" r="3.800" /></g>
          </svg>
          <span className="whitespace-nowrap">设自选</span>
        </button>
      </div>
      <span className="absolute inset-x-0 bottom-0.5 mx-auto h-2.5 w-[504px] rounded-full bg-[#bcbdbc]" />
    </footer>
  );
}

export default function App() {
  return (
    <div className="min-h-screen w-full bg-white font-['Inter','Noto_Sans_CJK_SC',sans-serif] [font-feature-settings:'calt'_0]">
      <StatusBar />
      <Header />
      <div className="flex h-[140px] items-center justify-end gap-[50px] bg-[#feede5] pr-[52px] text-[#f05000]">
        <a href="#open" className="text-[49px] leading-none whitespace-nowrap">开户即享超6888元专业炒股工具</a>
        <button aria-label="关闭"><Cross className="size-[38px]" /></button>
      </div>
      <Quote />
      <Notice />
      <Tabs />
      <MaBar />
      <main className="relative">
        <div className="grid grid-cols-[798fr_397fr] gap-x-5 pr-8 pl-3">
          <div>
            <CandleChart />
            <TurnoverPanel />
            <KdjPanel />
            <DateAxis />
          </div>
          <ChipPanel />
        </div>
        <ChartOverlay />
      </main>
      <div className="h-[22px] bg-[#fff4f1]" />
      <BottomBar />
    </div>
  );
}
